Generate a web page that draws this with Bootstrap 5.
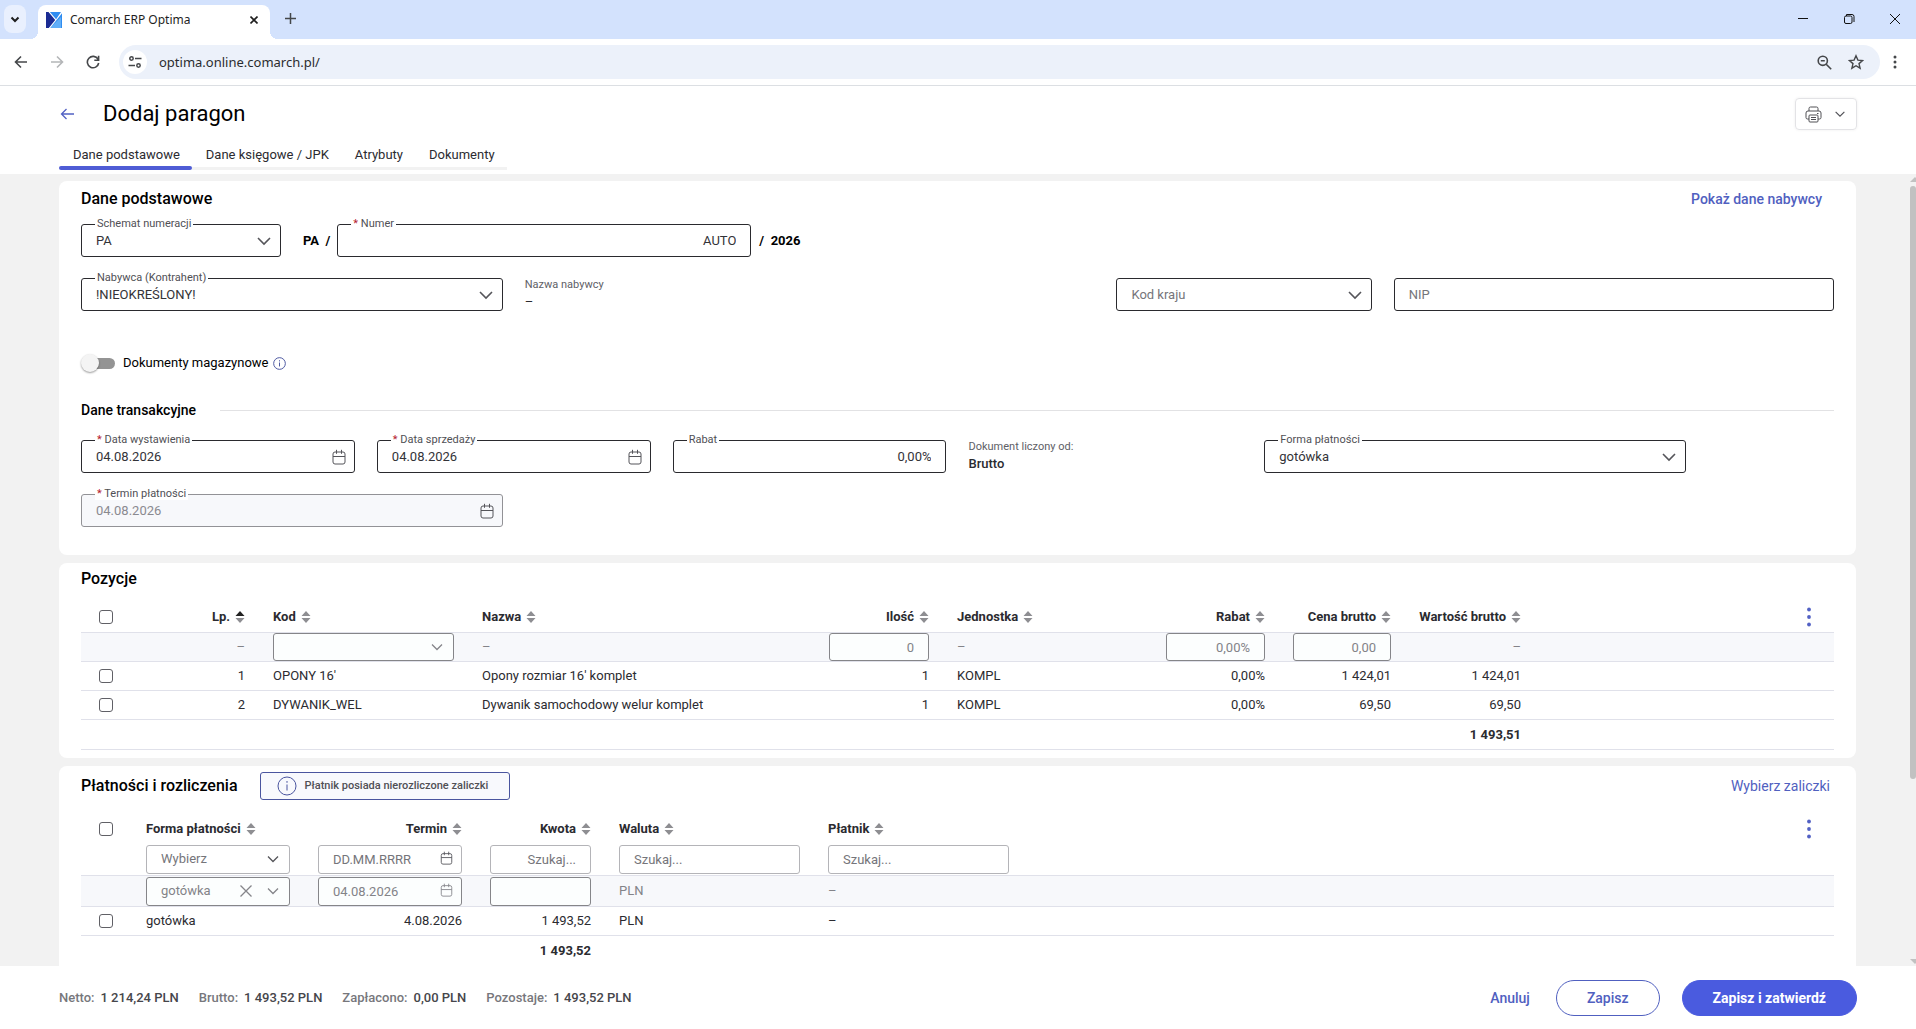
<!DOCTYPE html>
<html lang="pl">
<head>
<meta charset="utf-8">
<meta name="viewport" content="width=device-width, initial-scale=1">
<title>Comarch ERP Optima</title>
<link href="https://cdn.jsdelivr.net/npm/bootstrap@5.3.0/dist/css/bootstrap.min.css" rel="stylesheet">
<style>
:root{--ink:#2b2b30;--accent:#4a5bdf;--link:#5060c0;--muted:#75757a;--rule:#e0e1ea;--page:#f2f2f2}
body{font-family:Roboto,"Liberation Sans",sans-serif;font-size:13px;line-height:18px;color:var(--ink);background:#fff}
button{background:none;border:0;padding:0;color:inherit}
svg{display:block;flex:none;fill:none;stroke:currentColor}
svg.solid{stroke:none;fill:currentColor}
a{text-decoration:none}

/* browser frame */
.tabstrip{background:#d3e2fd;height:39px;padding-left:4px}
.tab-search{width:22px;height:28px;border-radius:8px;background:#e9f0fe;color:#1f1f1f;margin-top:5px}
.browser-tab{position:relative;width:232px;height:34px;margin:5px 0 0 12px;padding:0 8px 4px;background:#fff;border-radius:8px 8px 0 0;font:12px/16px "Noto Sans",sans-serif;color:#1f1f1f}
.browser-tab::before,.browser-tab::after{content:"";position:absolute;bottom:0;width:8px;height:8px}
.browser-tab::before{right:100%;background:radial-gradient(circle at 0 0,transparent 8px,#fff 8px)}
.browser-tab::after{left:100%;background:radial-gradient(circle at 100% 0,transparent 8px,#fff 8px)}
.new-tab{margin:0 0 2px 15px;color:#44474a}
.window-buttons{gap:30px;padding:0 13px 2px 0;color:#111}
.toolbar{height:47px;border-bottom:1px solid #dcdfe3;padding:0 19px 0 14px;color:#45474a}
.nav-buttons{gap:22px}
.off{color:#b4b6b8}
.address{height:34px;border-radius:17px;background:#ecf1fa;padding:0 16px 0 4px;margin:0 13px 0 19px}
.address input{font:13px/20px "Noto Sans",sans-serif;color:#2a2c2f;border:0;background:none;outline:0}
.site-info{width:24px;height:24px;border-radius:50%;background:#fff}

/* document header */
.doc-head{padding:0 59px;height:88px}
.doc-title{font-size:22px;line-height:28px;font-weight:400;color:#000}
.back{color:#5261c4}
.print-btn{width:62px;height:32px;border:1px solid #e3e3e6;border-radius:4px;box-shadow:0 0 3px #0001;color:#505055}
.doc-tabs .nav-link{padding:0 12px 3px 14px;line-height:18px;color:var(--ink);border-bottom:3px solid var(--page)}
.doc-tabs .nav-link.active{position:relative;border-bottom-color:transparent}
.doc-tabs .nav-link.active::after{content:"";position:absolute;left:0;right:0;bottom:-3px;height:4px;border-radius:2px;background:#4f5cd5}

/* scrolled area */
.work-area{background:var(--page);min-height:0}
.panels{min-width:0;padding:7px 54px 0 59px;gap:8px}
.panel{background:#fff;border-radius:8px;padding:0 22px}
.panel-form{padding-bottom:28px}
.panel-title{font-size:16px;line-height:20px;font-weight:500;color:#000;margin:0}
.title-gap{padding:6px 0 12px}
.sub-title{font-size:14px;line-height:18px;font-weight:500;color:#000;margin:0}
.panel-link{font-size:14px;line-height:18px;color:var(--link)}
.panel-link.strong{font-weight:500}
.rule{height:1px;background:#e2e2e4}
.row{--bs-gutter-x:22px;--bs-gutter-y:0}
.vscroll{width:6px;color:#c1c1c1;overflow:hidden}
.vscroll-thumb{height:593px;border-radius:4px;background:#c1c1c1}

/* outlined fields */
.field{position:relative}
.field label{position:absolute;left:14px;top:-7px;padding:0 2px;background:#fff;font-size:11px;line-height:13px;color:#505055;z-index:1}
.field label b{color:#b5202e;font-weight:400}
.field svg{position:absolute;right:9px;top:50%;margin-top:-8px;color:#55555a}
.ctl{display:block;width:100%;height:33px;padding:0 14px;border:1px solid #2a2a2e;border-radius:3px;background-color:#fff;font-size:13px;line-height:18px;color:#333338;outline:0;appearance:none}
.ctl:disabled{background-color:#f7f8fb;border-color:#929296;color:#8a8a90;opacity:1}
.ctl::placeholder{color:var(--muted);opacity:1}
select.ctl.blank{color:var(--muted)}
.w-scheme{width:200px}
.w-number{width:414px}
.col-country{flex:0 0 37.5%}
.static-label{font-size:11px;line-height:13px;color:#606066;margin-bottom:2px}
.brutto{font-weight:500}
.affix{font-weight:700;color:#000}
.affix-before{margin:0 7px 0 22px}
.scheme-line{margin-top:15px}
.f-gap{margin-top:21px}
.toggle-line{margin-top:43px}
.trans-line{margin-top:29px;gap:24px}
.trans-fields{margin-top:21px}

.switch{appearance:none;position:relative;width:34px;height:18px;margin:0}
.switch::before{content:"";position:absolute;left:4px;right:0;top:4px;height:11px;border-radius:6px;background:#949494}
.switch::after{content:"";position:absolute;left:0;top:0;width:18px;height:18px;border-radius:50%;background:#f4f4f4;box-shadow:0 1px 2px #0006}

/* grids */
.grid{width:100%;table-layout:fixed;border-collapse:separate;border-spacing:0}
.grid th,.grid td{padding:0 14px;white-space:nowrap;border-bottom:1px solid var(--rule);vertical-align:middle}
.grid th{font-weight:700;border:0}
.grid .num{text-align:right}
.grid .pick{padding-left:18px}
.grid .draft td{background:#f7f8fb;color:#838388}
.grid .total td{font-weight:700}
.grid .ctl{height:29px;border-color:#858589;color:#838388}
.grid .filters .ctl{border-color:#b4b4b8;color:var(--muted)}
.grid .draft .ctl{background-color:#fcfefe}
.grid .field svg.clear{right:36px}
.grid .draft .field svg{color:#85858a}
.tickbox{appearance:none;display:block;width:14px;height:14px;margin:0;border:1px solid #606066;border-radius:3px;background:#fff}
.sorter{gap:5px}
.sorter svg{fill:#8e8e92;stroke:none}
.sorter svg .on{fill:#222}
.kebab{display:block;margin-left:11px;color:#5261c4}
.grid-items thead tr{height:31px}
.grid-items tbody tr{height:29px}
.grid-items .draft,.grid-items .total{height:30px}
.grid-items .ctl{height:28px}
.grid-items .draft td{border-top:1px solid var(--rule)}
.grid-pay .heads{height:28px}
.grid-pay .filters{height:33px}
.grid-pay .draft{height:31px}
.grid-pay tbody tr{height:29px}
.grid-pay .total{height:31px}
.c-pick{width:51px}.c-lp{width:127px}.c-text{width:209px}.c-name{width:347px}.c-num{width:128px}.c-pct{width:127px}.c-cost{width:126px}.c-worth{width:130px}.c-sum{width:129px}.c-date{width:172px}.c-menu{width:52px}

.pay-head{padding:6px 0 15px;gap:22px}
.notice{height:28px;border:1px solid #4a559f;border-radius:3px;background:#f8f9fd;padding:0 21px 0 16px;font-size:11px;line-height:14px;font-weight:500;color:#505055}
.notice svg,.info{color:#4a559f}

/* summary bar */
.summary{height:63px;padding:0 59px;font-weight:500;color:#46464b}
.summary dt{font-weight:500;color:#77777c}
.summary dd{margin:0}
.sums{gap:20px}
.sum-item{gap:6px}
.acts{gap:22px}
.btn-act{height:36px;border-radius:18px;font-size:14px;line-height:18px;font-weight:500;padding:0 30px;color:var(--link);border:1px solid var(--link)}
.btn-act.plain{border:0;padding:0 4px}
.btn-act.main{background:var(--accent);border-color:var(--accent);color:#fff;font-weight:700}
</style>
<script src="https://cdn.jsdelivr.net/npm/bootstrap@5.3.0/dist/js/bootstrap.bundle.min.js"></script>
</head>
<body class="vh-100 d-flex flex-column overflow-hidden">

<svg width="0" height="0" class="position-absolute" aria-hidden="true">
  <symbol id="chev" viewBox="0 0 16 16"><path d="M2 5l6 6 6-6" stroke-width="1.6"/></symbol>
  <symbol id="chev-s" viewBox="0 0 16 16"><path d="M3 5.5l5 5 5-5" stroke-width="1.3"/></symbol>
  <symbol id="cal" viewBox="0 0 14 16"><rect x="1" y="3" width="12" height="12" rx="2"/><path d="M1 7.500h12M4.500 .8v4M9.500 .8v4"/></symbol>
  <symbol id="sort" viewBox="0 0 10 12"><path d="M5 0l4.500 5h-9zM.5 7h9L5 12z"/></symbol>
  <symbol id="dots" viewBox="0 0 4 20"><circle cx="2" cy="2.500" r="1.900"/><circle cx="2" cy="10" r="1.900"/><circle cx="2" cy="17.500" r="1.900"/></symbol>
  <symbol id="info" viewBox="0 0 20 20"><circle cx="10" cy="10" r="9"/><path d="M10 8.500v6M10 5v1.800"/></symbol>
</svg>

<div class="tabstrip d-flex flex-shrink-0">
  <button class="tab-search d-flex align-items-center justify-content-center" aria-label="Szukaj kart"><svg width="10" height="10" viewBox="0 0 10 10" stroke-width="2"><path d="M1.500 3.500L5 7l3.500-3.500"/></svg></button>
  <div class="browser-tab d-flex align-items-center">
    <svg class="solid" width="16" height="16" viewBox="0 0 16 16"><path fill="#2f8cf0" d="M3 0h13v16H3z"/><path fill="#60aef8" d="M4 16L15 5v11z"/><path fill="#1b2b93" d="M0 0h3l7 8-7 8H0z"/><path fill="#fff" d="M2.500 0h1.400l6.200 7.300L15 0h1v1.200L4.200 16H2.800l6.400-8z"/></svg>
    <span class="ms-2 text-nowrap">Comarch ERP Optima</span>
    <button class="ms-auto me-1" aria-label="Zamknij kartę"><svg width="8" height="8" viewBox="0 0 8 8" stroke-width="1.600"><path d="M.5.5l7 7M7.500.5l-7 7"/></svg></button>
  </div>
  <button class="new-tab" aria-label="Nowa karta"><svg width="11" height="11" viewBox="0 0 11 11" stroke-width="1.500"><path d="M5.500 0v11M0 5.500h11"/></svg></button>
  <div class="window-buttons d-flex align-items-center ms-auto">
    <button aria-label="Minimalizuj"><svg width="16" height="12" viewBox="0 0 16 12"><path d="M3 5.500h10"/></svg></button>
    <button aria-label="Przywróć"><svg width="16" height="12" viewBox="0 0 16 12"><rect x="3.500" y="3" width="7.500" height="7.500" rx="1.500"/><path d="M5.500 3V1.500H11a2 2 0 0 1 2 2V9"/></svg></button>
    <button aria-label="Zamknij"><svg width="16" height="12" viewBox="0 0 16 12"><path d="M3 1l10 10M13 1L3 11"/></svg></button>
  </div>
</div>

<div class="toolbar d-flex align-items-center flex-shrink-0">
  <div class="nav-buttons d-flex align-items-center">
    <button aria-label="Wstecz"><svg width="14" height="14" viewBox="0 0 14 14" stroke-width="1.600"><path d="M13 7H2M7 1.500L1.500 7 7 12.500"/></svg></button>
    <button class="off" aria-label="Dalej"><svg width="14" height="14" viewBox="0 0 14 14" stroke-width="1.600"><path d="M1 7h11M7 1.500L12.500 7 7 12.500"/></svg></button>
    <button aria-label="Odśwież"><svg width="14" height="14" viewBox="0 0 14 14" stroke-width="1.600"><path d="M12 4.200A5.700 5.700 0 1 0 12.700 8M12.600 .8v4.400H8.300"/></svg></button>
  </div>
  <div class="address d-flex align-items-center flex-grow-1">
    <button class="site-info d-flex align-items-center justify-content-center" aria-label="Informacje o witrynie"><svg width="14" height="12" viewBox="0 0 14 12" stroke-width="1.500"><circle cx="3.500" cy="2.500" r="1.700"/><path d="M7 2.500h6.500M.5 9.500H7"/><circle cx="10.500" cy="9.500" r="1.700"/></svg></button>
    <input class="ms-2 ps-1 flex-grow-1" type="text" aria-label="Adres" value="optima.online.comarch.pl/">
    <button class="me-3" aria-label="Powiększenie"><svg width="15" height="15" viewBox="0 0 15 15" stroke-width="1.600"><circle cx="5.800" cy="5.800" r="4.600"/><path d="M9.200 9.200l5 5M3.800 5.800h4"/></svg></button>
    <button aria-label="Dodaj do zakładek"><svg width="16" height="16" viewBox="0 0 16 16" stroke-width="1.400"><path d="M8 1.800l1.900 4.300 4.700.4-3.600 3.100 1.100 4.600L8 11.700l-4.100 2.500L5 9.600 1.400 6.500l4.700-.4z"/></svg></button>
  </div>
  <button aria-label="Menu"><svg class="solid" width="4" height="14" viewBox="0 0 4 14"><circle cx="2" cy="2" r="1.500"/><circle cx="2" cy="7" r="1.500"/><circle cx="2" cy="12" r="1.500"/></svg></button>
</div>

<header class="doc-head d-flex flex-column flex-shrink-0">
  <div class="d-flex align-items-center justify-content-between pt-2 mt-1">
    <div class="d-flex align-items-center">
      <a href="#" aria-label="Wróć" class="back pe-4 me-1"><svg width="16" height="14" viewBox="0 0 16 14" stroke-width="1.300"><path d="M15 7H2.500M7.500 2l-5 5 5 5"/></svg></a>
      <h1 class="doc-title m-0">Dodaj paragon</h1>
    </div>
    <button class="print-btn d-flex align-items-center justify-content-around px-1" aria-label="Drukuj">
      <svg width="17" height="17" viewBox="0 0 17 17"><path d="M4 5V2.500a1.500 1.500 0 0 1 1.500-1.500h6A1.500 1.500 0 0 1 13 2.500V5M4 13H2.500A1.500 1.500 0 0 1 1 11.500V7a2 2 0 0 1 2-2h11a2 2 0 0 1 2 2v4.500a1.500 1.500 0 0 1-1.500 1.500H13M12 7.500h1.500"/><rect x="4" y="9" width="9" height="7" rx="1"/><path d="M6 11.500h5M6 13.500h5"/></svg>
      <svg width="14" height="14"><use href="#chev-s"/></svg>
    </button>
  </div>
  <nav class="nav doc-tabs mt-auto mb-1" aria-label="Zakładki dokumentu">
    <a class="nav-link active" href="#">Dane podstawowe</a>
    <a class="nav-link" href="#">Dane księgowe / JPK</a>
    <a class="nav-link" href="#">Atrybuty</a>
    <a class="nav-link" href="#">Dokumenty</a>
  </nav>
</header>

<div class="work-area d-flex flex-grow-1 overflow-hidden">
  <main class="panels d-flex flex-column flex-grow-1">

    <section class="panel panel-form flex-shrink-0">
      <div class="d-flex justify-content-between align-items-center pt-2 pe-2 me-1">
        <h2 class="panel-title">Dane podstawowe</h2>
        <a class="panel-link strong" href="#">Pokaż dane nabywcy</a>
      </div>
      <div class="scheme-line d-flex align-items-center">
        <div class="field w-scheme"><label for="scheme">Schemat numeracji</label><select id="scheme" class="ctl"><option>PA</option></select><svg width="16" height="16"><use href="#chev"/></svg></div>
        <span class="affix affix-before">PA &nbsp;/</span>
        <div class="field w-number"><label for="number"><b>*</b> Numer</label><input id="number" class="ctl text-end" value="AUTO"></div>
        <span class="affix ms-2">/ &nbsp;2026</span>
      </div>
      <div class="row f-gap">
        <div class="col-3"><div class="field"><label for="buyer">Nabywca (Kontrahent)</label><select id="buyer" class="ctl"><option>!NIEOKREŚLONY!</option></select><svg width="16" height="16"><use href="#chev"/></svg></div></div>
        <div class="col-4"><div class="static-label">Nazwa nabywcy</div><div>–</div></div>
        <div class="col-5"><div class="row">
          <div class="col-country"><div class="field"><select aria-label="Kod kraju" class="ctl blank"><option>Kod kraju</option></select><svg width="16" height="16"><use href="#chev"/></svg></div></div>
          <div class="col"><div class="field"><input aria-label="NIP" class="ctl" placeholder="NIP"></div></div>
        </div></div>
      </div>
      <div class="toggle-line d-flex align-items-center">
        <input id="stock" type="checkbox" role="switch" class="switch"><label for="stock" class="text-black ms-2">Dokumenty magazynowe</label>
        <svg class="info ms-1" width="13" height="13" stroke-width="1.500"><use href="#info"/></svg>
      </div>
      <div class="trans-line d-flex align-items-center">
        <h3 class="sub-title">Dane transakcyjne</h3><div class="rule flex-grow-1"></div>
      </div>
      <div class="row trans-fields">
        <div class="col-2"><div class="field"><label for="issued"><b>*</b> Data wystawienia</label><input id="issued" class="ctl" value="04.08.2026"><svg width="14" height="16"><use href="#cal"/></svg></div></div>
        <div class="col-2"><div class="field"><label for="sold"><b>*</b> Data sprzedaży</label><input id="sold" class="ctl" value="04.08.2026"><svg width="14" height="16"><use href="#cal"/></svg></div></div>
        <div class="col-2"><div class="field"><label for="discount">Rabat</label><input id="discount" class="ctl text-end" value="0,00%"></div></div>
        <div class="col-2"><div class="static-label">Dokument liczony od:</div><div class="brutto">Brutto</div></div>
        <div class="col-3"><div class="field"><label for="payform">Forma płatności</label><select id="payform" class="ctl"><option>gotówka</option></select><svg width="16" height="16"><use href="#chev"/></svg></div></div>
      </div>
      <div class="row f-gap">
        <div class="col-3"><div class="field"><label for="due"><b>*</b> Termin płatności</label><input id="due" class="ctl" value="04.08.2026" disabled><svg width="14" height="16"><use href="#cal"/></svg></div></div>
      </div>
    </section>

    <section class="panel flex-shrink-0 pb-2">
      <h2 class="panel-title title-gap">Pozycje</h2>
      <table class="grid grid-items">
        <colgroup><col class="c-pick"><col class="c-lp"><col class="c-text"><col class="c-name"><col class="c-num"><col class="c-text"><col class="c-pct"><col class="c-cost"><col class="c-worth"><col><col class="c-menu"></colgroup>
        <thead><tr>
          <th class="pick"><input type="checkbox" class="tickbox" aria-label="Zaznacz wszystkie pozycje"></th>
          <th><span class="sorter d-flex align-items-center justify-content-end">Lp. <svg width="10" height="12" viewBox="0 0 10 12"><path class="on" d="M5 0l4.500 5h-9z"/><path d="M.5 7h9L5 12z"/></svg></span></th>
          <th><span class="sorter d-flex align-items-center">Kod <svg width="10" height="12"><use href="#sort"/></svg></span></th>
          <th><span class="sorter d-flex align-items-center">Nazwa <svg width="10" height="12"><use href="#sort"/></svg></span></th>
          <th><span class="sorter d-flex align-items-center justify-content-end">Ilość <svg width="10" height="12"><use href="#sort"/></svg></span></th>
          <th><span class="sorter d-flex align-items-center">Jednostka <svg width="10" height="12"><use href="#sort"/></svg></span></th>
          <th><span class="sorter d-flex align-items-center justify-content-end">Rabat <svg width="10" height="12"><use href="#sort"/></svg></span></th>
          <th><span class="sorter d-flex align-items-center justify-content-end">Cena brutto <svg width="10" height="12"><use href="#sort"/></svg></span></th>
          <th><span class="sorter d-flex align-items-center justify-content-end">Wartość brutto <svg width="10" height="12"><use href="#sort"/></svg></span></th>
          <th></th>
          <th><button class="kebab" aria-label="Menu pozycji"><svg class="solid" width="4" height="20"><use href="#dots"/></svg></button></th>
        </tr></thead>
        <tbody>
          <tr class="draft"><td></td><td class="num">–</td><td><div class="field"><select class="ctl" aria-label="Kod"><option></option></select><svg width="16" height="16"><use href="#chev-s"/></svg></div></td><td>–</td><td><input class="ctl text-end" aria-label="Ilość" value="0"></td><td>–</td><td><input class="ctl text-end" aria-label="Rabat" value="0,00%"></td><td><input class="ctl text-end" aria-label="Cena brutto" value="0,00"></td><td class="num">–</td><td></td><td></td></tr>
          <tr><td class="pick"><input type="checkbox" class="tickbox" aria-label="Pozycja 1"></td><td class="num">1</td><td>OPONY 16'</td><td>Opony rozmiar 16' komplet</td><td class="num">1</td><td>KOMPL</td><td class="num">0,00%</td><td class="num">1 424,01</td><td class="num">1 424,01</td><td></td><td></td></tr>
          <tr><td class="pick"><input type="checkbox" class="tickbox" aria-label="Pozycja 2"></td><td class="num">2</td><td>DYWANIK_WEL</td><td>Dywanik samochodowy welur komplet</td><td class="num">1</td><td>KOMPL</td><td class="num">0,00%</td><td class="num">69,50</td><td class="num">69,50</td><td></td><td></td></tr>
          <tr class="total"><td colspan="8"></td><td class="num">1 493,51</td><td></td><td></td></tr>
        </tbody>
      </table>
    </section>

    <section class="panel flex-shrink-0 pb-2">
      <div class="pay-head d-flex align-items-center">
        <h2 class="panel-title">Płatności i rozliczenia</h2>
        <div class="notice d-flex align-items-center gap-2" role="status"><svg width="20" height="20"><use href="#info"/></svg>Płatnik posiada nierozliczone zaliczki</div>
        <a class="panel-link ms-auto me-1" href="#">Wybierz zaliczki</a>
      </div>
      <table class="grid grid-pay">
        <colgroup><col class="c-pick"><col class="c-date"><col class="c-date"><col class="c-sum"><col class="c-text"><col class="c-text"><col><col class="c-menu"></colgroup>
        <thead>
          <tr class="heads">
            <th class="pick"><input type="checkbox" class="tickbox" aria-label="Zaznacz wszystkie płatności"></th>
            <th><span class="sorter d-flex align-items-center">Forma płatności <svg width="10" height="12"><use href="#sort"/></svg></span></th>
            <th><span class="sorter d-flex align-items-center justify-content-end">Termin <svg width="10" height="12"><use href="#sort"/></svg></span></th>
            <th><span class="sorter d-flex align-items-center justify-content-end">Kwota <svg width="10" height="12"><use href="#sort"/></svg></span></th>
            <th><span class="sorter d-flex align-items-center">Waluta <svg width="10" height="12"><use href="#sort"/></svg></span></th>
            <th><span class="sorter d-flex align-items-center">Płatnik <svg width="10" height="12"><use href="#sort"/></svg></span></th>
            <th></th>
            <th><button class="kebab" aria-label="Menu płatności"><svg class="solid" width="4" height="20"><use href="#dots"/></svg></button></th>
          </tr>
          <tr class="filters">
            <td></td>
            <td><div class="field"><select class="ctl" aria-label="Filtr formy płatności"><option>Wybierz</option></select><svg width="16" height="16"><use href="#chev-s"/></svg></div></td>
            <td><div class="field"><input class="ctl" aria-label="Filtr terminu" placeholder="DD.MM.RRRR"><svg width="13" height="14"><use href="#cal"/></svg></div></td>
            <td><input class="ctl text-end" aria-label="Filtr kwoty" placeholder="Szukaj..."></td>
            <td><input class="ctl" aria-label="Filtr waluty" placeholder="Szukaj..."></td>
            <td><input class="ctl" aria-label="Filtr płatnika" placeholder="Szukaj..."></td>
            <td></td><td></td>
          </tr>
        </thead>
        <tbody>
          <tr class="draft">
            <td></td>
            <td><div class="field"><select class="ctl" aria-label="Forma płatności"><option>gotówka</option></select><svg class="clear" width="16" height="16" viewBox="0 0 16 16"><path d="M2.500 2.500l11 11M13.500 2.500l-11 11" stroke-width="1.300"/></svg><svg width="16" height="16"><use href="#chev-s"/></svg></div></td>
            <td><div class="field"><input class="ctl" aria-label="Termin" value="04.08.2026"><svg width="13" height="14"><use href="#cal"/></svg></div></td>
            <td><input class="ctl text-end" aria-label="Kwota"></td>
            <td>PLN</td><td>–</td><td></td><td></td>
          </tr>
          <tr><td class="pick"><input type="checkbox" class="tickbox" aria-label="Płatność 1"></td><td>gotówka</td><td class="num">4.08.2026</td><td class="num">1 493,52</td><td>PLN</td><td>–</td><td></td><td></td></tr>
          <tr class="total"><td colspan="3"></td><td class="num">1 493,52</td><td colspan="4"></td></tr>
        </tbody>
      </table>
    </section>
  </main>
  <div class="vscroll d-flex flex-column flex-shrink-0" aria-hidden="true">
    <svg class="solid" width="10" height="12" viewBox="0 0 10 12"><path d="M0 8l5-5 5 5z"/></svg>
    <div class="vscroll-thumb"></div>
    <svg class="solid mt-auto" width="10" height="10" viewBox="0 0 10 10"><path d="M0 3l5 5 5-5z"/></svg>
  </div>
</div>

<footer class="summary d-flex align-items-center flex-shrink-0">
  <dl class="d-flex m-0 sums">
    <div class="sum-item d-flex"><dt>Netto:</dt><dd>1 214,24 PLN</dd></div>
    <div class="sum-item d-flex"><dt>Brutto:</dt><dd>1 493,52 PLN</dd></div>
    <div class="sum-item d-flex"><dt>Zapłacono:</dt><dd>0,00 PLN</dd></div>
    <div class="sum-item d-flex"><dt>Pozostaje:</dt><dd>1 493,52 PLN</dd></div>
  </dl>
  <div class="d-flex align-items-center ms-auto acts">
    <button class="btn-act plain">Anuluj</button>
    <button class="btn-act">Zapisz</button>
    <button class="btn-act main">Zapisz i zatwierdź</button>
  </div>
</footer>
</body>
</html>
